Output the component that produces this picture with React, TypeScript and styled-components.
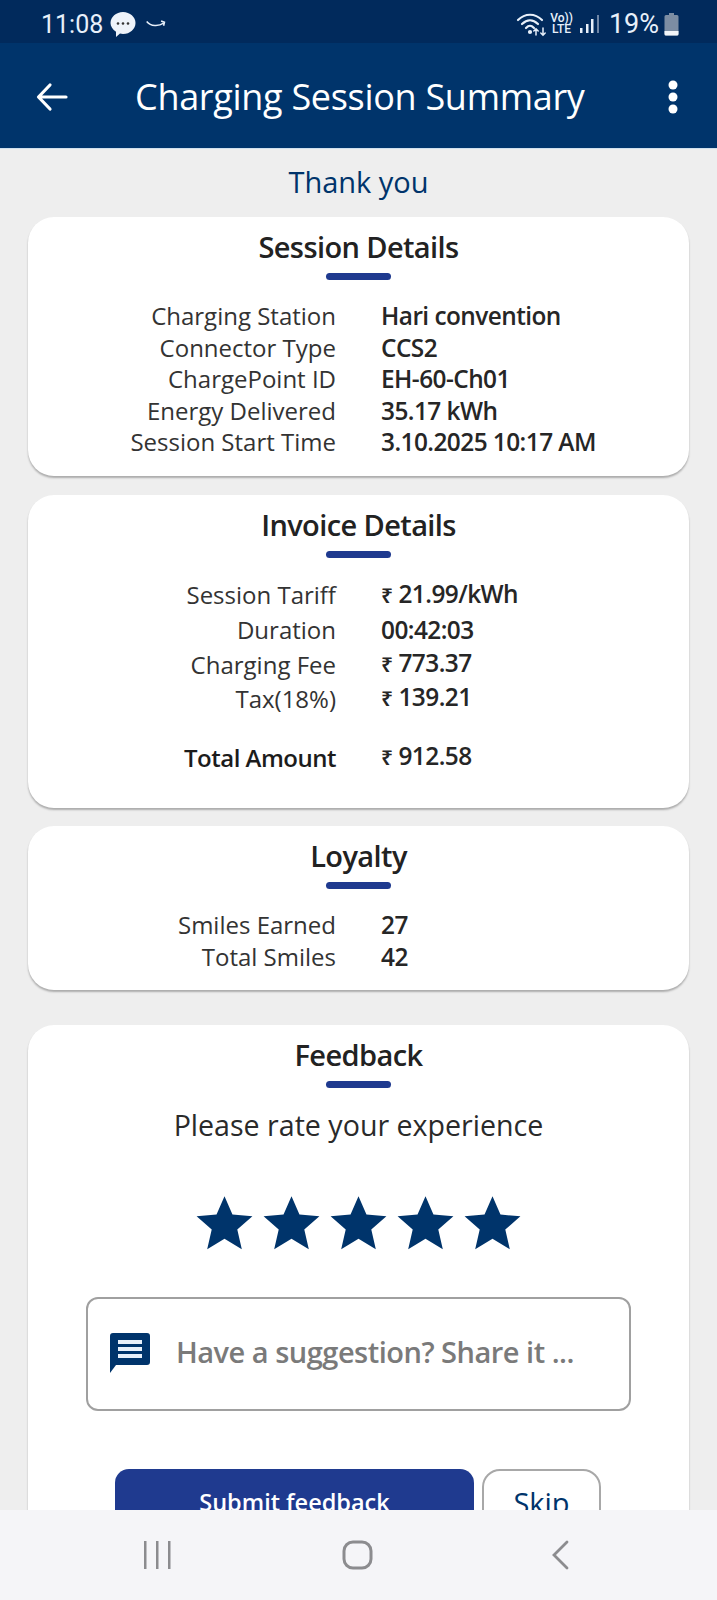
import React from 'react';
import styled, { createGlobalStyle } from 'styled-components';

const color = {
  STATUS: '#012a5c',
  NAVY: '#00346b',
  BLUE: '#1f3a8f',
  PAGE: '#eeeeee',
  TEXT: '#222222',
  NAV: '#f5f5f8',
};

const GlobalStyle = createGlobalStyle`
  html, body {
    margin: 0;
    padding: 0;
    background: ${color.PAGE};
  }
  * {
    box-sizing: border-box;
  }
`;

const StyledScreen = styled.div`
  width: 717px;
  height: 1600px;
  display: flex;
  flex-direction: column;
  overflow: hidden;
  font-family: 'Open Sans', 'Noto Sans', sans-serif;
  color: ${color.TEXT};
`;

const StyledStatusBar = styled.div`
  height: 43px;
  flex: none;
  display: flex;
  align-items: center;
  justify-content: space-between;
  padding: 5px 38px 0 41px;
  background-color: ${color.STATUS};
  color: #e8f0fa;
`;

const StyledStatusGroup = styled.div`
  display: flex;
  align-items: center;
`;

const StyledClock = styled.span`
  font-family: Roboto, sans-serif;
  font-size: 25px;
  margin-right: 6px;
`;

const StyledVolte = styled.span`
  font-family: Roboto, sans-serif;
  font-size: 12px;
  font-weight: 500;
  line-height: 11px;
  text-align: center;
  margin: 0 6px 0 2px;
`;

const StyledPercent = styled.span`
  font-family: Roboto, sans-serif;
  font-size: 27px;
  margin: 0 5px 0 8px;
`;

const StyledAppBar = styled.div`
  height: 106px;
  flex: none;
  display: flex;
  align-items: center;
  padding: 2px 38px 0 36px;
  background-color: ${color.NAVY};
  border-bottom: 1px solid #cfe0ee;
  color: #ffffff;
`;

const StyledTitle = styled.h1`
  flex: 1;
  margin: 0 0 0 67px;
  font-size: 36px;
  font-weight: 400;
  letter-spacing: -0.3px;
  white-space: nowrap;
`;

const StyledContent = styled.div`
  flex: 1;
  min-height: 0;
  overflow: hidden;
  display: flex;
  flex-direction: column;
  padding: 0 28px;
  background-color: ${color.PAGE};
`;

const StyledThanks = styled.div`
  height: 68px;
  flex: none;
  padding-top: 13px;
  text-align: center;
  font-size: 29px;
  line-height: 40px;
  color: ${color.NAVY};
`;

const StyledCard = styled.section<{ $height?: number; $after: number }>`
  flex: none;
  height: ${({ $height }) => ($height ? `${$height}px` : 'auto')};
  margin-bottom: ${({ $after }) => $after}px;
  padding-top: 12px;
  background-color: #ffffff;
  border-radius: 26px;
  box-shadow: 0 2px 2px rgba(0, 0, 0, 0.28);
`;

const StyledCardTitle = styled.h2`
  margin: 0;
  text-align: center;
  font-size: 29px;
  line-height: 36px;
  font-weight: 600;
  letter-spacing: -0.6px;
`;

const StyledRule = styled.div`
  width: 65px;
  height: 7px;
  margin: 8px auto 0;
  border-radius: 4px;
  background-color: ${color.BLUE};
`;

const StyledRows = styled.div<{ $top: number }>`
  margin-top: ${({ $top }) => $top}px;
`;

const StyledRow = styled.div<{ $height: number }>`
  display: grid;
  grid-template-columns: 308px 1fr;
  column-gap: 45px;
  align-items: center;
  height: ${({ $height }) => $height}px;
  font-size: 24px;
`;

const StyledLabel = styled.span<{ $bold?: boolean }>`
  text-align: right;
  white-space: nowrap;
  color: ${({ $bold }) => ($bold ? '#1c1c1c' : '#333333')};
  font-weight: ${({ $bold }) => ($bold ? 600 : 400)};
  letter-spacing: ${({ $bold }) => ($bold ? '-0.5px' : '0')};
`;

const StyledValue = styled.span<{ $raise?: number }>`
  margin-bottom: ${({ $raise }) => $raise ?? 0}px;
  font-size: 24.4px;
  font-weight: 600;
  letter-spacing: -0.55px;
  white-space: nowrap;
  color: #262626;
`;

const StyledRupee = styled.span`
  font-size: 21px;
  font-weight: 600;
  margin-right: 6px;
`;

const StyledPrompt = styled.p`
  margin: 18px 0 0;
  text-align: center;
  font-size: 28.6px;
  line-height: 38px;
  color: #2a2a2a;
`;

const StyledStars = styled.div`
  display: flex;
  justify-content: center;
  margin-top: 46px;
  color: ${color.NAVY};
`;

const StyledInputBox = styled.div`
  display: flex;
  align-items: center;
  height: 114px;
  margin: 40px 58px 0;
  padding: 0 0 0 22px;
  background-color: #ffffff;
  border: 2px solid #a0a0a0;
  border-radius: 12px;
`;

const StyledPlaceholder = styled.div`
  height: 38px;
  margin: 0 0 4px 26px;
  overflow: hidden;
  font-size: 29px;
  line-height: 38px;
  font-weight: 600;
  letter-spacing: -0.5px;
  white-space: nowrap;
  color: #7a7a7a;
`;

const StyledActions = styled.div`
  display: flex;
  gap: 8px;
  margin: 58px 0 0 87px;
`;

const StyledSubmit = styled.button`
  width: 359px;
  height: 70px;
  border: none;
  border-radius: 14px;
  padding: 0 0 5px;
  background-color: ${color.BLUE};
  color: #ffffff;
  font-family: inherit;
  font-size: 23.5px;
  font-weight: 600;
  line-height: 30px;
  text-align: center;
  align-self: flex-start;
`;

const StyledSkip = styled.button`
  width: 119px;
  height: 70px;
  border: 2px solid #a8a8a8;
  border-radius: 18px;
  padding: 0 0 3px;
  background-color: #ffffff;
  color: ${color.NAVY};
  font-family: inherit;
  font-size: 29px;
  line-height: 36px;
  text-align: center;
  align-self: flex-start;
`;

const StyledNav = styled.nav`
  height: 90px;
  flex: none;
  position: relative;
  z-index: 1;
  display: grid;
  grid-template-columns: 144px 27px 171px 31px 178px 18px;
  align-items: center;
  padding-bottom: 1px;
  background-color: ${color.NAV};
  color: #8c8c8f;
`;

const StyledNavItem = styled.div<{ $col: number }>`
  grid-column: ${({ $col }) => $col};
  display: flex;
`;

const details = [
  ['Charging Station', 'Hari convention'],
  ['Connector Type', 'CCS2'],
  ['ChargePoint ID', 'EH-60-Ch01'],
  ['Energy Delivered', '35.17 kWh'],
  ['Session Start Time', '3.10.2025 10:17 AM'],
];

const invoice = [
  { label: 'Session Tariff', value: '21.99/kWh', rupee: true, height: 35, raise: 2 },
  { label: 'Duration', value: '00:42:03', rupee: false, height: 34, raise: 0 },
  { label: 'Charging Fee', value: '773.37', rupee: true, height: 34, raise: 4 },
  { label: 'Tax(18%)', value: '139.21', rupee: true, height: 35, raise: 3 },
];

const loyalty = [
  ['Smiles Earned', '27'],
  ['Total Smiles', '42'],
];

const Star = () => (
  <svg width="67" height="67" viewBox="0 0 24 24" fill="currentColor">
    <path d="M12 2.2l2.85 6.62 7.15.62-5.42 4.72 1.62 7.04L12 17.5l-6.2 3.7 1.62-7.04L2 9.44l7.15-.62z" />
  </svg>
);

const App = () => (
  <StyledScreen>
    <GlobalStyle />
    <StyledStatusBar>
      <StyledStatusGroup>
        <StyledClock>11:08</StyledClock>
        <svg width="28" height="28" viewBox="0 0 28 28">
          <path d="M14 2c7 0 12.500 5 12.500 11S21 24 14 24c-1 0-2-.1-3-.4L7 27v-5.300C3.700 19.600 1.500 16.500 1.500 13 1.500 7 7 2 14 2z" fill="#eef3fa" />
          <circle cx="9" cy="13.500" r="1.300" fill="#333" />
          <circle cx="14" cy="13.500" r="1.300" fill="#333" />
          <circle cx="19" cy="13.500" r="1.300" fill="#333" />
        </svg>
        <svg width="22" height="12" viewBox="0 0 26 12" style={{ marginLeft: 8 }} fill="none" stroke="#e8f0fa" strokeWidth="1.800">
          <path d="M2 3c5 6 14 6 20 2M19 2.500l4 1.500-1 4" />
        </svg>
      </StyledStatusGroup>
      <StyledStatusGroup>
        <svg width="32" height="28" viewBox="0 0 32 28" fill="none" stroke="#e8f0fa" strokeWidth="2.200" strokeLinecap="round">
          <path d="M2 10c7-7 17-7 24 0" />
          <path d="M6 14c5-5 11-5 16 0" />
          <path d="M10 18c3-3 5-3 8 0" />
          <path d="M20 25v-6M17.800 21l2.200-2.200 2.200 2.200M27 18v7M24.800 23l2.200 2.200 2.200-2.200" strokeWidth="1.500" />
          <circle cx="14" cy="22" r="1" fill="#e8f0fa" />
        </svg>
        <StyledVolte>
          Vo))
          <br />
          LTE
        </StyledVolte>
        <svg width="22" height="20" viewBox="0 0 22 20">
          <rect x="1" y="14" width="2.500" height="5" fill="#e8f0fa" />
          <rect x="7" y="10" width="2.500" height="9" fill="#e8f0fa" />
          <rect x="12" y="5" width="2.500" height="14" fill="#e8f0fa" />
          <rect x="18" y="1" width="2" height="18" fill="#6f86a6" />
        </svg>
        <StyledPercent>19%</StyledPercent>
        <svg width="15" height="24" viewBox="0 0 15 24">
          <path d="M5 1h5v2h3a1.500 1.500 0 0 1 1.500 1.500V22a1.500 1.500 0 0 1-1.500 1.500H2A1.500 1.500 0 0 1 .5 22V4.500A1.500 1.500 0 0 1 2 3h3z" fill="#7c8da3" />
          <path d="M.5 19h14v3a1.500 1.500 0 0 1-1.500 1.500H2A1.500 1.500 0 0 1 .5 22z" fill="#f2f5f9" />
        </svg>
      </StyledStatusGroup>
    </StyledStatusBar>

    <StyledAppBar>
      <svg width="32" height="30" viewBox="0 0 32 30" fill="none" stroke="#fff" strokeWidth="3.200" strokeLinecap="round" strokeLinejoin="round">
        <path d="M30 15H3M14 3L2.500 15 14 27" />
      </svg>
      <StyledTitle>Charging Session Summary</StyledTitle>
      <svg width="12" height="34" viewBox="0 0 12 34" fill="#fff">
        <circle cx="6" cy="5" r="4.500" />
        <circle cx="6" cy="17" r="4.500" />
        <circle cx="6" cy="29" r="4.500" />
      </svg>
    </StyledAppBar>

    <StyledContent>
      <StyledThanks>Thank you</StyledThanks>

      <StyledCard $height={259} $after={19}>
        <StyledCardTitle>Session Details</StyledCardTitle>
        <StyledRule />
        <StyledRows $top={19}>
          {details.map(([label, value]) => (
            <StyledRow key={label} $height={31.5}>
              <StyledLabel>{label}</StyledLabel>
              <StyledValue>{value}</StyledValue>
            </StyledRow>
          ))}
        </StyledRows>
      </StyledCard>

      <StyledCard $height={313} $after={18}>
        <StyledCardTitle>Invoice Details</StyledCardTitle>
        <StyledRule />
        <StyledRows $top={19}>
          {invoice.map(({ label, value, rupee, height, raise }) => (
            <StyledRow key={label} $height={height}>
              <StyledLabel>{label}</StyledLabel>
              <StyledValue $raise={raise}>
                {rupee && <StyledRupee>₹</StyledRupee>}
                {value}
              </StyledValue>
            </StyledRow>
          ))}
        </StyledRows>
        <StyledRows $top={24}>
          <StyledRow $height={35}>
            <StyledLabel $bold>Total Amount</StyledLabel>
            <StyledValue $raise={4}>
              <StyledRupee>₹</StyledRupee>
              912.58
            </StyledValue>
          </StyledRow>
        </StyledRows>
      </StyledCard>

      <StyledCard $height={164} $after={35}>
        <StyledCardTitle>Loyalty</StyledCardTitle>
        <StyledRule />
        <StyledRows $top={19}>
          {loyalty.map(([label, value]) => (
            <StyledRow key={label} $height={31.7}>
              <StyledLabel>{label}</StyledLabel>
              <StyledValue>{value}</StyledValue>
            </StyledRow>
          ))}
        </StyledRows>
      </StyledCard>

      <StyledCard $after={0}>
        <StyledCardTitle>Feedback</StyledCardTitle>
        <StyledRule />
        <StyledPrompt>Please rate your experience</StyledPrompt>
        <StyledStars>
          {[1, 2, 3, 4, 5].map((n) => (
            <Star key={n} />
          ))}
        </StyledStars>
        <StyledInputBox>
          <svg width="40" height="42" viewBox="0 0 40 42">
            <path d="M3 0h34a3 3 0 0 1 3 3v26a3 3 0 0 1-3 3H6l-6 8V3a3 3 0 0 1 3-3z" fill="#00346b" />
            <path d="M8 7h24v4H8zM8 14h24v4H8zM8 21h24v4H8z" fill="#e8f0fa" />
          </svg>
          <StyledPlaceholder>Have a suggestion? Share it ...</StyledPlaceholder>
        </StyledInputBox>
        <StyledActions>
          <StyledSubmit>Submit feedback</StyledSubmit>
          <StyledSkip>Skip</StyledSkip>
        </StyledActions>
      </StyledCard>
    </StyledContent>

    <StyledNav>
      <StyledNavItem $col={2}>
        <svg width="27" height="28" viewBox="0 0 27 28" fill="currentColor">
          <rect x="0" y="0" width="2.500" height="28" />
          <rect x="12" y="0" width="2.500" height="28" />
          <rect x="24" y="0" width="2.500" height="28" />
        </svg>
      </StyledNavItem>
      <StyledNavItem $col={4}>
        <svg width="31" height="30" viewBox="0 0 31 30" fill="none" stroke="currentColor" strokeWidth="3">
          <rect x="2" y="2" width="27" height="26" rx="9" />
        </svg>
      </StyledNavItem>
      <StyledNavItem $col={6}>
        <svg width="18" height="30" viewBox="0 0 18 30" fill="none" stroke="currentColor" strokeWidth="2.800" strokeLinecap="round">
          <path d="M16 2L3 15l13 13" />
        </svg>
      </StyledNavItem>
    </StyledNav>
  </StyledScreen>
);

export default App;
